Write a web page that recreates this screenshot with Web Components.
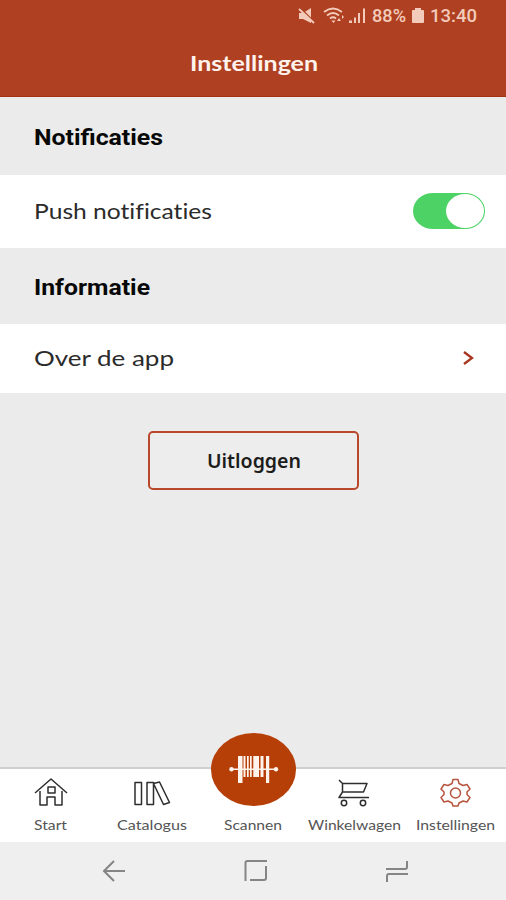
<!DOCTYPE html>
<html lang="nl">
<head>
<meta charset="utf-8">
<title>Instellingen</title>
<style>
  body {
    margin: 0;
    font-family: Lato, "Liberation Sans", sans-serif;
    font-variant-ligatures: none;
    color: #2b2b2b;
  }
</style>
</head>
<body>
<settings-app></settings-app>

<script>
// Text stretched horizontally to a fixed width
class FitText extends HTMLElement {
  constructor() {
    super();
    this.attachShadow({ mode: 'open' });
    this.shadowRoot.innerHTML = `<style>
      :host { display: block; flex: none; white-space: nowrap; }
      span { display: inline-block; transform-origin: 0 50%; }
    </style>
    <span><slot></slot></span>`;
  }

  connectedCallback() {
    const width = Number(this.getAttribute('width'));
    const span = this.shadowRoot.querySelector('span');
    this.style.width = width + 'px';
    span.style.transform = `scaleX(${width / span.getBoundingClientRect().width})`;
  }
}

class StatusBar extends HTMLElement {
  constructor() {
    super();
    this.attachShadow({ mode: 'open' });
    this.shadowRoot.innerHTML = `<style>
      :host {
        display: flex;
        align-items: center;
        justify-content: flex-end;
        height: 31px;
        padding-right: 29px;
        color: #f3cbbb;
        font: 500 18px/31px Roboto, sans-serif;
      }
      svg { display: block; fill: currentColor; }
      .battery { margin: 0 6px; }
      .icons { margin-right: 4px; }
    </style>
    <svg class="icons" width="70" height="18" viewBox="0 0 70 18">
      <path d="M1 6h4l8-5v15l-8-4H1z"/>
      <path d="M2 1l14 14" stroke="#af4122" stroke-width="2"/>
      <path d="M1 2l15 14" stroke="currentColor" stroke-width="1.8"/>
      <g fill="none" stroke="currentColor" stroke-width="1.8">
        <path d="M26 5q9-7 18 0"/>
        <path d="M29 8.500q6-5 12 0"/>
        <path d="M32 11.500q3-2.500 6 0"/>
      </g>
      <path d="M33.500 13.500h4l-2 2.500zM39 14l2-3 2 3zM44 8l2 2-2 2z"/>
      <path d="M51 13.500h3v2.500h-3zM56 10.500h2v5.500h-2zM60 6h2v10h-2zM65 1.500h2v14.500h-2z"/>
    </svg>
    <fit-text width="34">88%</fit-text>
    <svg class="battery" width="12" height="15" viewBox="0 0 12 15">
      <path d="M3 0h6v2h2q1 0 1 1v11q0 1-1 1H1q-1 0-1-1V3q0-1 1-1h2z"/>
    </svg>
    <fit-text width="47">13:40</fit-text>`;
  }
}

class AppHeader extends HTMLElement {
  constructor() {
    super();
    this.attachShadow({ mode: 'open' });
    this.shadowRoot.innerHTML = `<style>
      :host {
        display: block;
        box-sizing: border-box;
        height: 97px;
        background: #af4122;
        border-bottom: 1px solid #a23210;
      }
      .title {
        display: flex;
        justify-content: center;
        padding-left: 1px;
        color: #fff3ee;
        font-size: 21px;
        font-weight: 700;
        line-height: 64px;
      }
    </style>
    <status-bar></status-bar>
    <div class="title"><slot></slot></div>`;
  }
}

class SectionTitle extends HTMLElement {
  constructor() {
    super();
    this.attachShadow({ mode: 'open' });
    this.shadowRoot.innerHTML = `<style>
      :host {
        display: flex;
        align-items: center;
        padding: 4px 0 0 34px;
        color: #080808;
        font: 700 22px/26px Roboto, sans-serif;
      }
    </style>
    <slot></slot>`;
  }
}

class SettingRow extends HTMLElement {
  constructor() {
    super();
    this.attachShadow({ mode: 'open' });
    this.shadowRoot.innerHTML = `<style>
      :host {
        display: flex;
        align-items: center;
        justify-content: space-between;
        padding: 0 21px 1px 34px;
        background: #fff;
        font-size: 21px;
        line-height: 26px;
      }
    </style>
    <slot></slot><slot name="control"></slot>`;
  }
}

class ToggleSwitch extends HTMLElement {
  constructor() {
    super();
    this.attachShadow({ mode: 'open' });
    this.shadowRoot.innerHTML = `<style>
      :host {
        display: flex;
        justify-content: flex-end;
        box-sizing: border-box;
        width: 72px;
        height: 36px;
        padding: 1px;
        border-radius: 20px / 18px;
        background: #4cd265;
      }
      i { width: 38px; height: 34px; border-radius: 50%; background: #fff; }
    </style>
    <i></i>`;
  }
}

class OutlineButton extends HTMLElement {
  constructor() {
    super();
    this.attachShadow({ mode: 'open' });
    this.shadowRoot.innerHTML = `<style>
      :host { display: block; width: 211px; }
      button {
        display: flex;
        align-items: center;
        justify-content: center;
        width: 100%;
        height: 59px;
        padding: 0 1px 0 0;
        border: 2px solid #b8472b;
        border-radius: 5px;
        background: #ededed;
        color: #1c1c1c;
        font: 600 19px/24px "Noto Sans", sans-serif;
      }
    </style>
    <button><slot></slot></button>`;
  }
}

const icons = {
  start: '<path d="M1 16L17 2l16 14M6 14v14h7v-8h8v8h7V14M14 10h7v6h-7z"/>',
  catalogus: '<path d="M0 5.500h6.500v22H0zM12 5.500h6.500v22H12zM18.500 6.500l6-1.500 10 20.500-6 2z"/>',
  winkelwagen: '<path d="M2 3l3.500 3.500V15L2 20.500h30M5.500 6.500H30L26.500 15h-21"/><circle cx="7" cy="26" r="2.700"/><circle cx="26" cy="26" r="2.700"/>',
  instellingen: '<path d="M15 2.500h5l1 4 4 2 4-1 3 4.500-3 3v2.500l3 3-3 4.500-4-1-4 2-1 3h-5l-1-3-4-2-4 1-3-4.500 3-3V15l-3-3 3-4.500 4 1 4-2z"/><circle cx="17.500" cy="16" r="5"/>'
};

class TabItem extends HTMLElement {
  constructor() {
    super();
    this.attachShadow({ mode: 'open' });
    this.shadowRoot.innerHTML = `<style>
      :host {
        flex: 1 1 0;
        display: flex;
        flex-direction: column;
        align-items: center;
        justify-content: flex-end;
        height: 64px;
        color: #555;
        font-size: 14px;
        line-height: 18px;
      }
      svg {
        display: block;
        overflow: visible;
        margin-bottom: 8px;
        fill: none;
        stroke: #2e2e2e;
        stroke-width: 1.5;
        stroke-linejoin: round;
      }
      :host([active]) svg { stroke: #b8553e; }
    </style>
    <svg width="34" height="31" viewBox="0 0 34 31"></svg>
    <slot></slot>`;
  }

  connectedCallback() {
    this.shadowRoot.querySelector('svg').innerHTML = icons[this.getAttribute('icon')];
  }
}

class ScanTab extends HTMLElement {
  constructor() {
    super();
    this.attachShadow({ mode: 'open' });
    this.shadowRoot.innerHTML = `<style>
      :host {
        flex: 1 1 0;
        display: flex;
        flex-direction: column;
        align-items: center;
        color: #555;
        font-size: 14px;
        line-height: 18px;
      }
      svg { display: block; margin-bottom: 10px; }
    </style>
    <svg width="85" height="73" viewBox="0 0 85 73">
      <ellipse cx="42.500" cy="36.500" rx="42.500" ry="36.500" fill="#b63f08"/>
      <g fill="#fff4ec">
        <path d="M21 35.500h44v1.500H21z"/>
        <circle cx="20.500" cy="36.300" r="2.200"/>
        <circle cx="65" cy="36.300" r="2.200"/>
        <path d="M27 23h4.500v27H27zM32.500 23h2v21h-2zM36 23h1.700v21H36zM39 23h1.700v21H39zM42.300 23h5.700v21h-5.700zM49.500 23h3v21h-3zM55 23h3.200v27H55z"/>
      </g>
    </svg>
    <slot></slot>`;
  }
}

class TabBar extends HTMLElement {
  constructor() {
    super();
    this.attachShadow({ mode: 'open' });
    this.shadowRoot.innerHTML = `<style>
      :host {
        display: flex;
        align-items: flex-end;
        box-sizing: border-box;
        height: 75px;
        padding-bottom: 8px;
        border-top: 2px solid #cfcfcf;
        background: #fff;
      }
    </style>
    <slot></slot>`;
  }
}

class SystemNav extends HTMLElement {
  constructor() {
    super();
    this.attachShadow({ mode: 'open' });
    this.shadowRoot.innerHTML = `<style>
      :host {
        display: flex;
        align-items: center;
        justify-content: space-between;
        height: 58px;
        padding: 0 97px 0 103px;
        background: #efefef;
      }
      svg { fill: none; stroke: #858585; stroke-width: 2; }
    </style>
    <svg width="24" height="24" viewBox="0 0 24 24"><path d="M11 2L1 12l10 10M1 12h21"/></svg>
    <svg width="24" height="24" viewBox="0 0 24 24"><path d="M1.500 22V4q0-2 2-2H23M6 21h14q2 0 2-2V7"/></svg>
    <svg width="24" height="24" viewBox="0 0 24 24"><path d="M1 10h19q2 0 2-2V2M23 15H4q-2 0-2 2v6"/></svg>`;
  }
}

class SettingsApp extends HTMLElement {
  constructor() {
    super();
    this.attachShadow({ mode: 'open' });
    this.shadowRoot.innerHTML = `<style>
      :host {
        display: flex;
        flex-direction: column;
        width: 506px;
        height: 900px;
        overflow: hidden;
        background: #ebebeb;
      }
      app-header, tab-bar, system-nav { flex: none; }
      main {
        flex: 1;
        display: grid;
        grid-template-rows: 78px 73px 76px 69px auto;
        align-content: start;
      }
      outline-button { margin: 38px auto 0 148px; }
      .chevron { display: block; margin-right: 11px; }
    </style>
    <app-header><fit-text width="128">Instellingen</fit-text></app-header>
    <main>
      <section-title><fit-text width="129">Notificaties</fit-text></section-title>
      <setting-row>
        <fit-text width="178">Push notificaties</fit-text>
        <toggle-switch slot="control"></toggle-switch>
      </setting-row>
      <section-title><fit-text width="116">Informatie</fit-text></section-title>
      <setting-row>
        <fit-text width="140">Over de app</fit-text>
        <svg class="chevron" slot="control" width="12" height="14" viewBox="0 0 12 14">
          <path d="M2 1l8 6-8 6" fill="none" stroke="#a8351f" stroke-width="2.300"/>
        </svg>
      </setting-row>
      <outline-button><fit-text width="94">Uitloggen</fit-text></outline-button>
    </main>
    <tab-bar>
      <tab-item icon="start"><fit-text width="33">Start</fit-text></tab-item>
      <tab-item icon="catalogus"><fit-text width="70">Catalogus</fit-text></tab-item>
      <scan-tab><fit-text width="58">Scannen</fit-text></scan-tab>
      <tab-item icon="winkelwagen"><fit-text width="93">Winkelwagen</fit-text></tab-item>
      <tab-item icon="instellingen" active><fit-text width="79">Instellingen</fit-text></tab-item>
    </tab-bar>
    <system-nav></system-nav>`;
  }
}

customElements.define('fit-text', FitText);
customElements.define('status-bar', StatusBar);
customElements.define('app-header', AppHeader);
customElements.define('section-title', SectionTitle);
customElements.define('setting-row', SettingRow);
customElements.define('toggle-switch', ToggleSwitch);
customElements.define('outline-button', OutlineButton);
customElements.define('tab-item', TabItem);
customElements.define('scan-tab', ScanTab);
customElements.define('tab-bar', TabBar);
customElements.define('system-nav', SystemNav);
customElements.define('settings-app', SettingsApp);
</script>
</body>
</html>
